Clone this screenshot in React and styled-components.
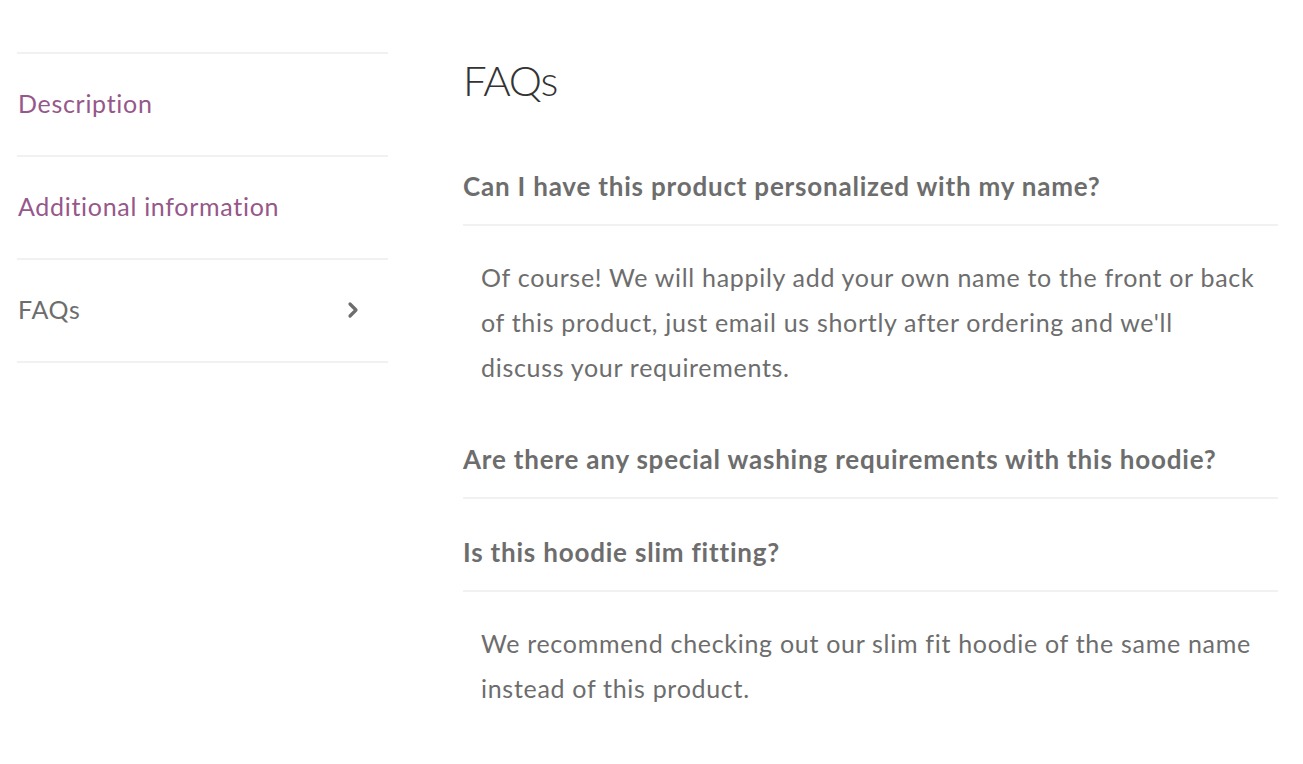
import React from 'react';
import styled, { createGlobalStyle } from 'styled-components';

const colors = {
  link: '#96588a',
  text: '#6d6d6d',
  heading: '#333333',
  border: '#f1f1f1',
};

const tabs = [
  { label: 'Description' },
  { label: 'Additional information' },
  { label: 'FAQs', active: true },
];

const faqs = [
  {
    q: 'Can I have this product personalized with my name?',
    a: "Of course! We will happily add your own name to the front or back of this product, just email us shortly after ordering and we'll discuss your requirements.",
  },
  { q: 'Are there any special washing requirements with this hoodie?' },
  {
    q: 'Is this hoodie slim fitting?',
    a: 'We recommend checking out our slim fit hoodie of the same name instead of this product.',
  },
];

export default function App() {
  return (
    <>
      <GlobalStyle />
      <Page>
        <TabList>
          {tabs.map((t) => (
            <Tab key={t.label} active={t.active}>
              <TabLabel>{t.label}</TabLabel>
              {t.active && (
                <Chevron viewBox="0 0 12 18" aria-hidden="true">
                  <polyline points="3,3 9,9 3,15" />
                </Chevron>
              )}
            </Tab>
          ))}
        </TabList>
        <Panel>
          <Title>FAQs</Title>
          {faqs.map((f) => (
            <Faq key={f.q}>
              <Question>{f.q}</Question>
              {f.a && <Answer>{f.a}</Answer>}
            </Faq>
          ))}
        </Panel>
      </Page>
    </>
  );
}

const GlobalStyle = createGlobalStyle`
  body {
    margin: 0;
    background: #fff;
    font-family: Lato, "Open Sans", sans-serif;
    color: ${colors.text};
  }
`;

const Page = styled.div`
  display: flex;
  align-items: flex-start;
  gap: 75px;
  padding: 52px 25px 0 17px;
`;

const TabList = styled.ul`
  list-style: none;
  margin: 0;
  padding: 0;
  width: 371px;
  flex-shrink: 0;
  border-top: 2px solid ${colors.border};
`;

const Tab = styled.li`
  display: flex;
  align-items: center;
  justify-content: space-between;
  height: 103px;
  box-sizing: border-box;
  padding: 0 29px 3px 1px;
  border-bottom: 2px solid ${colors.border};
  font-size: 25px;
  letter-spacing: 0.7px;
  color: ${({ active }) => (active ? colors.text : colors.link)};
`;

const TabLabel = styled.span`
  line-height: 30px;
`;

const Chevron = styled.svg`
  width: 12px;
  height: 18px;
  margin-top: 2px;
  fill: none;
  stroke: ${colors.text};
  stroke-width: 3.2;
  stroke-linecap: round;
  stroke-linejoin: round;
`;

const Panel = styled.div`
  flex: 1;
  min-width: 0;
  padding-top: 1px;
`;

const Title = styled.h2`
  margin: 0 0 26px;
  font-size: 42px;
  line-height: 54px;
  font-weight: 300;
  letter-spacing: -1.2px;
  color: ${colors.heading};
`;

const Faq = styled.div``;

const Question = styled.h3`
  margin: 0;
  padding: 38px 0 23px;
  font-size: 26px;
  line-height: 30px;
  font-weight: 700;
  letter-spacing: 0.8px;
  color: ${colors.text};
  border-bottom: 2px solid ${colors.border};
`;

const Answer = styled.p`
  margin: 0;
  padding: 29px 18px 16px;
  font-size: 25px;
  line-height: 45px;
  letter-spacing: 0.7px;
  color: ${colors.text};
`;
